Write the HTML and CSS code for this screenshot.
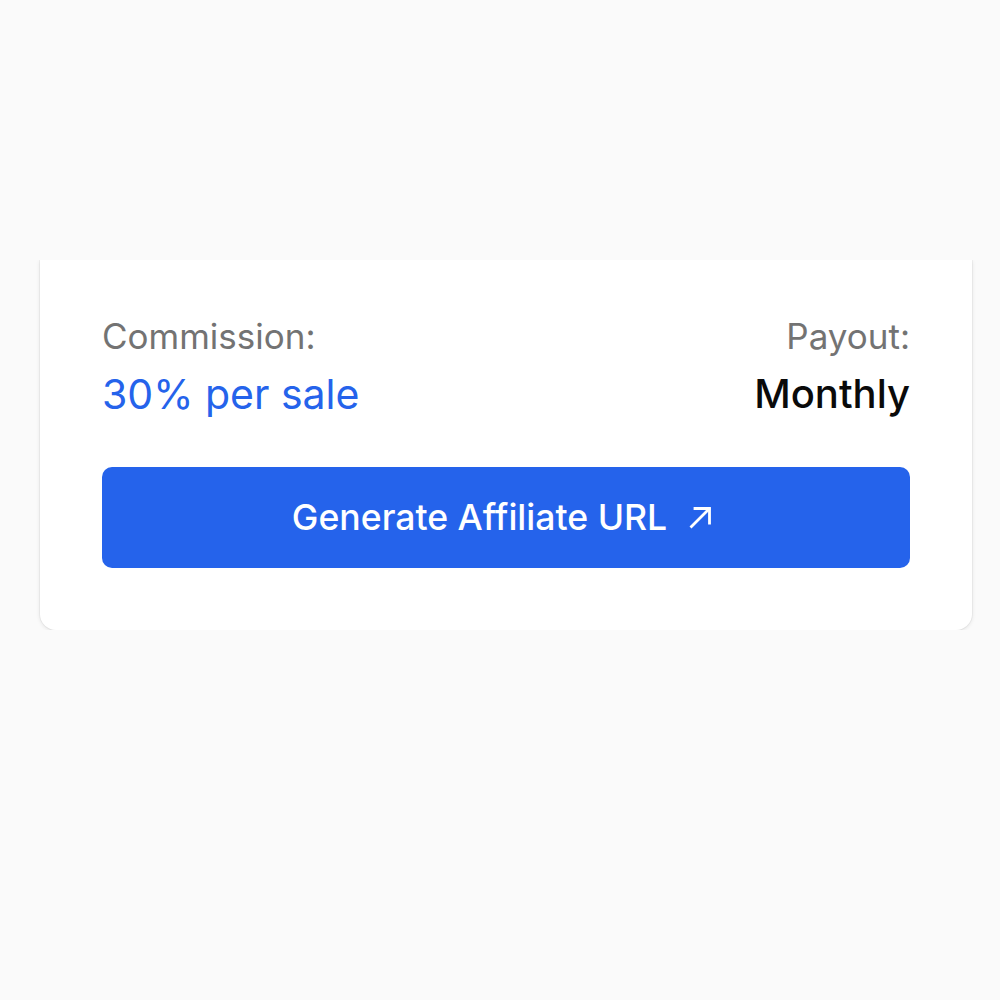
FILE: index.html
```html
<!DOCTYPE html>
<html>
<head>
<meta charset="utf-8">
<link rel="stylesheet" href="styles.css">
</head>
<body>
<div class="page">
  <div class="card">
    <div class="info">
      <div class="col">
        <div class="label">Commission:</div>
        <div class="value blue">30% per sale</div>
      </div>
      <div class="col right">
        <div class="label">Payout:</div>
        <div class="value dark">Monthly</div>
      </div>
    </div>
    <button class="btn">
      <span>Generate Affiliate URL</span>
      <svg class="arrow" viewBox="0 0 32 24" width="32" height="24" fill="none" stroke="currentColor" stroke-width="2.8" stroke-linecap="square" stroke-linejoin="miter"><path d="M3.5 20.5L21 3"/><path d="M7 2.5h14.5V17"/></svg>
    </button>
  </div>
</div>
</body>
</html>
```
FILE: styles.css
```css
html, body {
  margin: 0;
  padding: 0;
  background: #fafafa;
  font-family: Inter, "Noto Sans", sans-serif;
}
.page {
  padding-top: 260px;
}
.card {
  margin-left: 40px;
  width: 932px;
  box-sizing: border-box;
  background: #fff;
  border-radius: 0 0 16px 16px;
  box-shadow: 0 1px 4px rgba(0,0,0,0.10), 0 0 0 1px rgba(0,0,0,0.035);
  clip-path: inset(0 -20px -20px -20px);
  padding: 54px 62px 62px;
}
.info {
  display: flex;
  justify-content: space-between;
}
.col {
  display: flex;
  flex-direction: column;
  gap: 11px;
}
.col.right {
  align-items: flex-end;
}
.label {
  font-size: 35px;
  line-height: 44px;
  color: #737373;
}
.value {
  font-size: 41px;
  line-height: 50px;
  color: #0a0a0a;
}
.value.blue {
  color: #2563eb;
}
.value.dark {
  font-weight: 500;
  font-size: 40px;
}
.btn {
  margin-top: 48px;
  width: 100%;
  height: 101px;
  border: none;
  border-radius: 10px;
  background: #2563eb;
  color: #fff;
  font-family: inherit;
  font-size: 35.6px;
  font-weight: 500;
  display: flex;
  align-items: center;
  justify-content: center;
  gap: 21px;
}
.arrow {
  display: block;
}
```
